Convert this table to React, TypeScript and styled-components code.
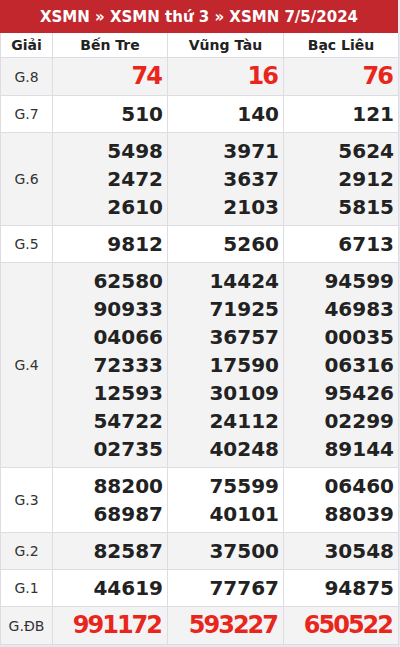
import styled, { createGlobalStyle } from 'styled-components';

const GlobalStyle = createGlobalStyle`
	html, body {
		margin: 0;
		padding: 0;
		background: #e8e9ef;
		font-family: 'DejaVu Sans', 'Liberation Sans', sans-serif;
	}
`;

const Wrapper = styled.div`
	width: 398px;
	background: #fff;
`;

const Title = styled.div`
	height: 33px;
	background: #c1272d;
	color: #fff;
	font-weight: bold;
	font-size: 15px;
	display: flex;
	align-items: center;
	justify-content: center;
`;

const Table = styled.table`
	width: 398px;
	table-layout: fixed;
	border-collapse: collapse;
	color: #222;
	th,
	td {
		border: 1px solid #dcdce2;
	}
	tr:first-child th {
		border-top: none;
	}
`;

const HeadCell = styled.th`
	height: 24px;
	padding: 0;
	font-size: 14px;
	font-weight: bold;
	text-align: center;
	background: #fff;
`;

const Row = styled.tr<{ shaded: boolean }>`
	background: ${(p) => (p.shaded ? '#f3f3f4' : '#fff')};
`;

const Label = styled.td`
	font-size: 14px;
	text-align: center;
	color: #333;
	padding: 0;
`;

const Numbers = styled.td<{ big: boolean }>`
	text-align: right;
	padding: 4px ${(p) => (p.big ? '6px' : '4px')} 4px 0;
	font-weight: bold;
	font-size: ${(p) => (p.big ? '24px' : '20px')};
	line-height: ${(p) => (p.big ? '29px' : '28px')};
	letter-spacing: ${(p) => (p.big ? '-2px' : '0')};
	color: ${(p) => (p.big ? '#e8261c' : '#222')};
	div {
		white-space: nowrap;
	}
`;

const provinces = ['Bến Tre', 'Vũng Tàu', 'Bạc Liêu'];

const prizes: { name: string; big?: boolean; values: string[][] }[] = [
	{ name: 'G.8', big: true, values: [['74'], ['16'], ['76']] },
	{ name: 'G.7', values: [['510'], ['140'], ['121']] },
	{
		name: 'G.6',
		values: [
			['5498', '2472', '2610'],
			['3971', '3637', '2103'],
			['5624', '2912', '5815'],
		],
	},
	{ name: 'G.5', values: [['9812'], ['5260'], ['6713']] },
	{
		name: 'G.4',
		values: [
			['62580', '90933', '04066', '72333', '12593', '54722', '02735'],
			['14424', '71925', '36757', '17590', '30109', '24112', '40248'],
			['94599', '46983', '00035', '06316', '95426', '02299', '89144'],
		],
	},
	{
		name: 'G.3',
		values: [
			['88200', '68987'],
			['75599', '40101'],
			['06460', '88039'],
		],
	},
	{ name: 'G.2', values: [['82587'], ['37500'], ['30548']] },
	{ name: 'G.1', values: [['44619'], ['77767'], ['94875']] },
	{ name: 'G.ĐB', big: true, values: [['991172'], ['593227'], ['650522']] },
];

const App = () => {
	return (
		<Wrapper>
			<GlobalStyle />
			<Title>XSMN » XSMN thứ 3 » XSMN 7/5/2024</Title>
			<Table>
				<colgroup>
					<col style={{ width: 52 }} />
					<col style={{ width: 115 }} />
					<col style={{ width: 116 }} />
					<col style={{ width: 115 }} />
				</colgroup>
				<thead>
					<tr>
						<HeadCell>Giải</HeadCell>
						{provinces.map((p) => (
							<HeadCell key={p}>{p}</HeadCell>
						))}
					</tr>
				</thead>
				<tbody>
					{prizes.map((prize, i) => (
						<Row key={prize.name} shaded={i % 2 === 0}>
							<Label>{prize.name}</Label>
							{prize.values.map((list, j) => (
								<Numbers key={j} big={!!prize.big}>
									{list.map((n, k) => (
										<div key={k}>{n}</div>
									))}
								</Numbers>
							))}
						</Row>
					))}
				</tbody>
			</Table>
		</Wrapper>
	);
};

export default App;
